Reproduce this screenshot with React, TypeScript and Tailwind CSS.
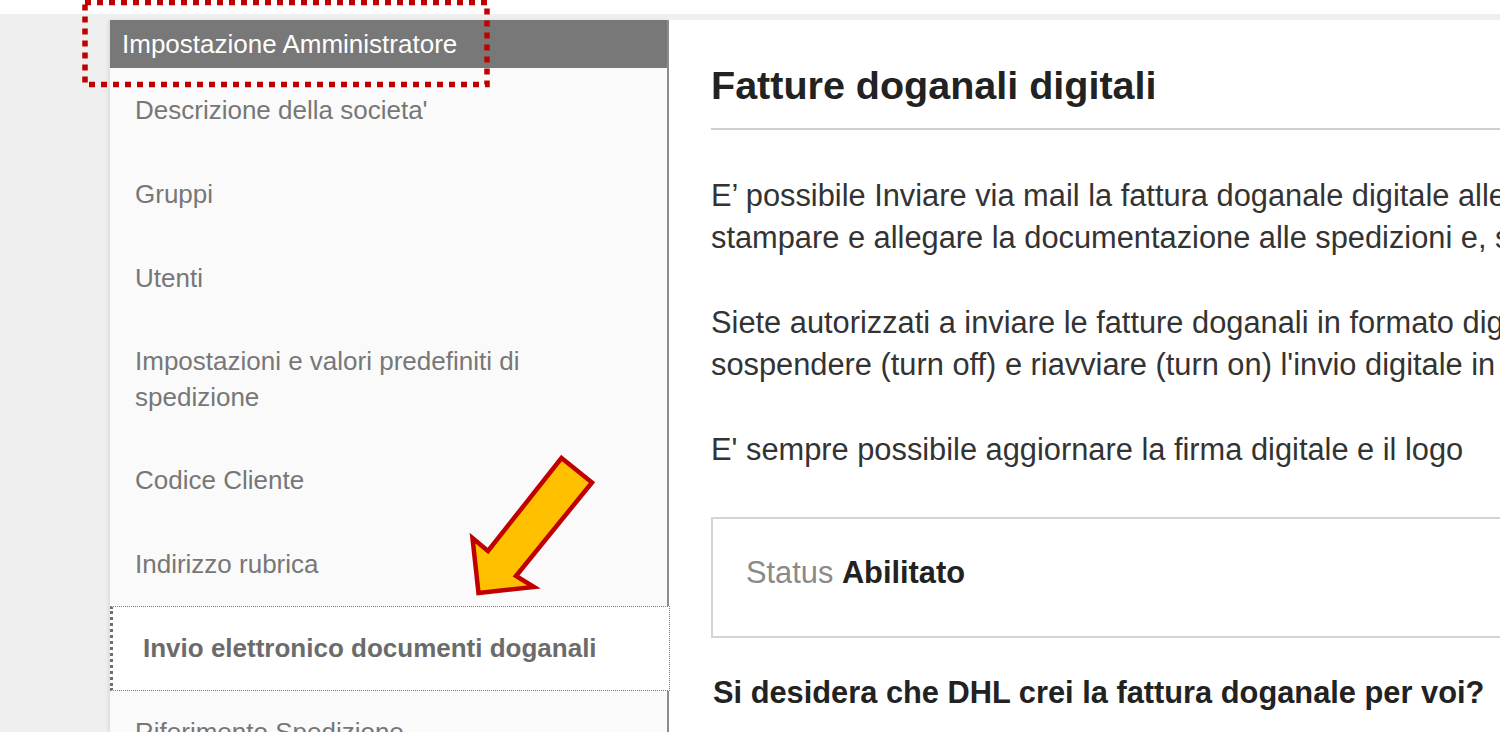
import React from "react"

const items = [
  "Descrizione della societa'",
  "Gruppi",
  "Utenti",
  "Impostazioni e valori predefiniti di spedizione",
  "Codice Cliente",
  "Indirizzo rubrica",
]

function SideItem({ label }: { label: string }) {
  const long = label.length > 30
  return (
    <div
      className={
        "px-[25px] py-[23px] text-[26px] text-[#777] max-w-[520px] " +
        (long ? "leading-[36px]" : "leading-[38px]")
      }
    >
      {label}
    </div>
  )
}

export default function App() {
  return (
    <div className="relative w-[1500px] h-[732px] overflow-hidden bg-white font-['Liberation_Sans',Arial,sans-serif]">
      <div className="h-[14px] bg-white" />

      <div className="flex h-[718px] bg-[#efefef] pt-[6px]">
        <div className="w-[110px] shrink-0" />

        {/* Sidebar */}
        <aside className="w-[559px] shrink-0 bg-[#fafafa] border-r-2 border-[#8c8c8c] shadow-[-2px_0_3px_rgba(0,0,0,0.08)]">
          <div className="h-[48px] bg-[#787878] flex items-center pl-3 text-[26px] text-white">
            Impostazione Amministratore
          </div>
          {items.map((it) => (
            <SideItem key={it} label={it} />
          ))}
          <div className="relative z-10 -mr-[3px] h-[85px] bg-white border border-dotted border-[#777] border-l-[3px] border-l-[#6e6e6e] flex items-center pl-[30px] text-[26px] font-bold text-[#6b6b6b]">
            Invio elettronico documenti doganali
          </div>
          <div className="px-[25px] pt-[22px] text-[26px] leading-[38px] text-[#777]">
            Riferimento Spedizione
          </div>
        </aside>

        {/* Main */}
        <main className="flex-1 bg-white pl-[42px] pt-[42px] overflow-hidden">
          <h1 className="text-[39.5px] leading-[46px] font-bold text-[#222] whitespace-nowrap">
            Fatture doganali digitali
          </h1>
          <div className="mt-[20px] h-[2px] bg-[#cfcfcf]" />

          <div className="mt-[45px] text-[30.8px] leading-[42px] text-[#333] whitespace-nowrap">
            <p>E’ possibile Inviare via mail la fattura doganale digitale alle autorità doganali, evitando di dover</p>
            <p>stampare e allegare la documentazione alle spedizioni e, se previsto, alle fatture.</p>
            <p className="mt-[43px]">Siete autorizzati a inviare le fatture doganali in formato digitale; potete in qualsiasi momento</p>
            <p>sospendere (turn off) e riavviare (turn on) l'invio digitale in base alle vostre esigenze.</p>
            <p className="mt-[43px]">E' sempre possibile aggiornare la firma digitale e il logo</p>
          </div>

          <div className="mt-[46px] h-[121px] border-2 border-r-0 border-[#d4d4d4] flex items-center pl-[33px] pb-[8px] text-[30.8px] whitespace-nowrap">
            <span className="text-[#8a8a8a]">Status&nbsp;</span>
            <span className="font-bold text-[#222]">Abilitato</span>
          </div>

          <p className="mt-[34px] pl-[2px] text-[30.8px] leading-[42px] font-bold text-[#222] whitespace-nowrap">
            Si desidera che DHL crei la fattura doganale per voi?
          </p>
        </main>
      </div>

      {/* red dotted highlight */}
      <svg className="absolute left-[80px] top-0 pointer-events-none" width="414" height="92">
        <rect x="5" y="2.5" width="402" height="82" fill="none" stroke="#c00000" strokeWidth="5.5" strokeDasharray="6 6" />
      </svg>

      {/* arrow */}
      <svg className="absolute left-[460px] top-[445px] pointer-events-none" width="150" height="160">
        <polygon
          points="101.5,13 132,37.5 56,131 74,142 18.5,148 12.5,93 28,106"
          fill="#ffc000"
          stroke="#c00000"
          strokeWidth="4.5"
          strokeLinejoin="miter"
        />
      </svg>
    </div>
  )
}
